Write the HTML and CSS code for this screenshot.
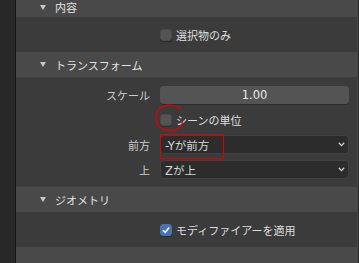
FILE: index.html
```html
<!DOCTYPE html>
<html lang="ja">
<head>
<meta charset="utf-8">
<link rel="stylesheet" href="styles.css">
</head>
<body>
<div class="sidebar"></div>
<div class="main">
  <div class="panel-header first">
    <svg class="tri" width="6" height="5" viewBox="0 0 6 5"><polygon points="0,0 6,0 3,5" fill="#c8c8c8"/></svg>
    <span>内容</span>
  </div>
  <div class="panel-body single">
    <div class="row">
      <div class="label"></div>
      <label class="check"><span class="box"></span><span>選択物のみ</span></label>
    </div>
  </div>

  <div class="panel-header">
    <svg class="tri" width="6" height="5" viewBox="0 0 6 5"><polygon points="0,0 6,0 3,5" fill="#c8c8c8"/></svg>
    <span>トランスフォーム</span>
  </div>
  <div class="panel-body multi">
    <div class="row">
      <div class="label">スケール</div>
      <div class="number">1.00</div>
    </div>
    <div class="row">
      <div class="label"></div>
      <label class="check"><span class="box"></span><span>シーンの単位</span></label>
    </div>
    <div class="row">
      <div class="label">前方</div>
      <div class="select"><span>-Yが前方</span>
        <svg class="chev" width="7" height="5" viewBox="0 0 7 5"><polyline points="0.8,0.8 3.5,3.6 6.2,0.8" fill="none" stroke="#d0d0d0" stroke-width="1.3"/></svg>
      </div>
    </div>
    <div class="row">
      <div class="label">上</div>
      <div class="select"><span>Zが上</span>
        <svg class="chev" width="7" height="5" viewBox="0 0 7 5"><polyline points="0.8,0.8 3.5,3.6 6.2,0.8" fill="none" stroke="#d0d0d0" stroke-width="1.3"/></svg>
      </div>
    </div>
  </div>

  <div class="panel-header">
    <svg class="tri" width="6" height="5" viewBox="0 0 6 5"><polygon points="0,0 6,0 3,5" fill="#c8c8c8"/></svg>
    <span>ジオメトリ</span>
  </div>
  <div class="panel-body single">
    <div class="row">
      <div class="label"></div>
      <label class="check"><span class="box checked"><svg width="10" height="10" viewBox="0 0 10 10"><polyline points="2,5.2 4.2,7.4 8.2,2.6" fill="none" stroke="#fff" stroke-width="1.6"/></svg></span><span>モディファイアーを適用</span></label>
    </div>
  </div>
  <div class="panel-header tail"></div>
</div>
<div class="edge"></div>

<svg class="annot loop" width="30" height="28" viewBox="0 0 30 28">
  <path d="M26,5 C22,1 12,0 6,3 C1,6 0,14 2,19 C4,25 12,27 19,26 C25,25 28,21 27,17" fill="none" stroke="#e00000" stroke-width="1.3"/>
</svg>
<div class="annot rect"></div>
</body>
</html>
```

FILE: styles.css
```css
html, body {
  margin: 0;
  padding: 0;
}
body {
  width: 359px;
  height: 263px;
  overflow: hidden;
  display: flex;
  background: #2a2a2a;
  font-family: "DejaVu Sans", "Noto Sans CJK JP", sans-serif;
  font-size: 11px;
  color: #dcdcdc;
  position: relative;
}
.sidebar {
  width: 15px;
  flex: none;
  background: #282828;
  border-right: 1px solid #161616;
}
.main {
  width: 341px;
  flex: none;
  display: flex;
  flex-direction: column;
}
.edge {
  flex: 1;
  background: #2e2e2e;
  border-left: 1px solid #454545;
}
.panel-header {
  height: 25px;
  flex: none;
  box-sizing: border-box;
  background: #494949;
  display: flex;
  align-items: center;
  padding-left: 24px;
  gap: 9px;
  color: #e2e2e2;
  font-family: "Noto Sans CJK JP", sans-serif;
}
.panel-header.first {
  height: 17px;
  padding-bottom: 3px;
}
.panel-header.tail {
  flex: 1;
}
.tri {
  display: block;
}
.panel-body {
  background: #3b3b3b;
  flex: none;
}
.panel-body.single {
  height: 35px;
  display: flex;
  flex-direction: column;
  justify-content: center;
}
.panel-body.multi {
  padding: 5px 0 5px;
}
.row {
  height: 25px;
  display: grid;
  grid-template-columns: 134px 1fr;
  column-gap: 10px;
  padding-right: 8px;
  align-items: center;
}
.label {
  text-align: right;
  color: #cdcdcd;
  font-family: "Noto Sans CJK JP", sans-serif;
}
.check {
  display: flex;
  align-items: center;
  gap: 4px;
  font-family: "Noto Sans CJK JP", sans-serif;
  color: #dedede;
}
.box {
  width: 12px;
  height: 12px;
  box-sizing: border-box;
  border-radius: 3px;
  background: #545454;
  border: 1px solid #4a4a4a;
  box-shadow: 0 1px 0 #2a2a2a;
  display: flex;
  align-items: center;
  justify-content: center;
}
.box.checked {
  background: #4772b3;
  border-color: #4772b3;
}
.number {
  height: 18px;
  border-radius: 4px;
  background: #545454;
  box-shadow: 0 1px 0 #2d2d2d;
  display: flex;
  align-items: center;
  justify-content: center;
  color: #e6e6e6;
  font-size: 11.5px;
}
.select {
  height: 19px;
  box-sizing: border-box;
  border-radius: 4px;
  background: #2c2c2c;
  border: 1px solid #414141;
  display: flex;
  align-items: center;
  justify-content: space-between;
  padding: 0 3px 0 4px;
  color: #d6d6d6;
  font-size: 11.5px;
}
.chev {
  display: block;
}
.annot {
  position: absolute;
  pointer-events: none;
}
.loop {
  left: 155px;
  top: 104px;
}
.rect {
  left: 160px;
  top: 134px;
  width: 62px;
  height: 23px;
  border: 1.5px solid #e00000;
}
```
